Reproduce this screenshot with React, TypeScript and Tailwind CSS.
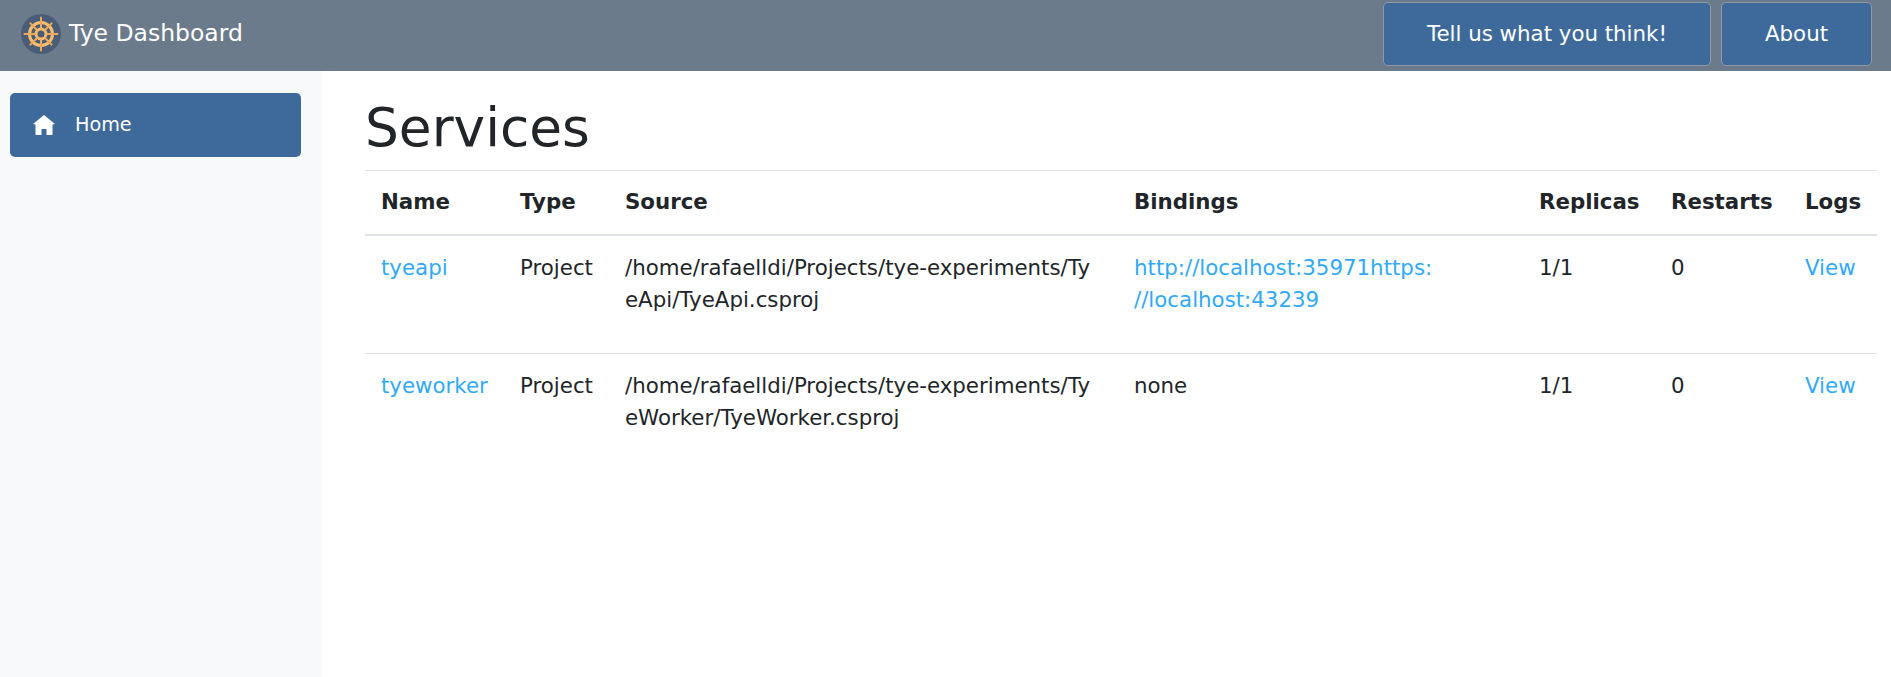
type Service = {
  name: string;
  source: string;
  bindings: string[];
};

const services: Service[] = [
  {
    name: 'tyeapi',
    source: '/home/rafaelldi/Projects/tye-experiments/TyeApi/TyeApi.csproj',
    bindings: ['http://localhost:35971https:', '//localhost:43239'],
  },
  {
    name: 'tyeworker',
    source: '/home/rafaelldi/Projects/tye-experiments/TyeWorker/TyeWorker.csproj',
    bindings: [],
  },
];

function WheelLogo() {
  const spokes = [0, 45, 90, 135, 180, 225, 270, 315];
  return (
    <svg viewBox="0 0 40 40" className="h-10 w-10 shrink-0">
      <circle cx="20" cy="20" r="20" fill="#4a5d78" />
      <circle cx="20" cy="20" r="11.5" fill="none" stroke="#f8bd6e" strokeWidth="3" />
      <circle cx="20" cy="20" r="5" fill="none" stroke="#f8bd6e" strokeWidth="3" />
      {spokes.map((angle) => (
        <line
          key={angle}
          x1="20"
          y1="14"
          x2="20"
          y2={angle % 90 === 0 ? 3.5 : 5}
          stroke="#f0a95a"
          strokeWidth="2"
          strokeLinecap="round"
          transform={`rotate(${angle} 20 20)`}
        />
      ))}
    </svg>
  );
}

function HomeIcon() {
  return (
    <svg viewBox="0 0 22 20" className="h-[20px] w-[22px] shrink-0" fill="currentColor">
      <path d="M11 0 L22 9 L19.5 9.5 L19.5 20 L13.5 20 L13.5 14 L8.5 14 L8.5 20 L2.5 20 L2.5 9.5 L0 9 Z" />
    </svg>
  );
}

export default function App() {
  return (
    <div className="flex h-[677px] flex-col overflow-hidden bg-white font-['DejaVu_Sans',sans-serif] text-[21.33px] leading-[32px] text-[#212529]">
      <header className="flex h-[71px] shrink-0 items-start justify-between bg-[#6c7b8b] pl-[21px] pr-[19px] pt-[2px]">
        <div className="mt-[12px] flex items-start gap-[8px]">
          <WheelLogo />
          <span className="mt-[3px] text-[23.47px] text-white">Tye Dashboard</span>
        </div>
        <div className="flex gap-[10px]">
          <button className="h-[64px] w-[328px] rounded-[5px] border border-[#8f9aa6] bg-[#3e6a9b] text-white">
            Tell us what you think!
          </button>
          <button className="h-[64px] w-[151px] rounded-[5px] border border-[#8f9aa6] bg-[#3e6a9b] text-white">
            About
          </button>
        </div>
      </header>

      <div className="flex min-h-0 flex-1">
        <aside className="w-[322px] shrink-0 bg-[#f8f9fa] pl-[10px] pr-[21px] pt-[22px]">
          <div className="flex h-[64px] items-center rounded-[5px] bg-[#3e6a9b] pl-[23px] text-[19.2px] text-white">
            <HomeIcon />
            <span className="ml-[20px]">Home</span>
          </div>
        </aside>

        <main className="min-w-0 flex-1 pl-[43px] pr-[14px]">
          <h1 className="pt-[25px] text-[53.33px] leading-[64px] text-[#212529]">Services</h1>
          <table className="mt-[10px] w-full table-fixed border-collapse text-left">
            <colgroup>
              <col className="w-[139px]" />
              <col className="w-[105px]" />
              <col className="w-[509px]" />
              <col className="w-[405px]" />
              <col className="w-[132px]" />
              <col className="w-[134px]" />
              <col className="w-[88px]" />
            </colgroup>
            <thead>
              <tr className="border-t border-b-2 border-t-[#dee2e6] border-b-[#dee2e6]">
                {['Name', 'Type', 'Source', 'Bindings', 'Replicas', 'Restarts', 'Logs'].map((h) => (
                  <th key={h} className="px-[16px] pb-[16px] pt-[15px] font-bold">
                    {h}
                  </th>
                ))}
              </tr>
            </thead>
            <tbody>
              {services.map((s) => (
                <tr key={s.name} className="border-b border-[#dee2e6] last:border-b-0">
                  <td className="h-[118px] p-[16px] align-top">
                    <a className="text-[#31a9fa]" href="#">
                      {s.name}
                    </a>
                  </td>
                  <td className="p-[16px] align-top">Project</td>
                  <td className="p-[16px] align-top break-all">{s.source}</td>
                  <td className="p-[16px] align-top">
                    {s.bindings.length === 0 ? (
                      'none'
                    ) : (
                      <a className="text-[#31a9fa]" href="#">
                        {s.bindings[0]}
                        <wbr />
                        {s.bindings[1]}
                      </a>
                    )}
                  </td>
                  <td className="p-[16px] align-top">1/1</td>
                  <td className="p-[16px] align-top">0</td>
                  <td className="p-[16px] align-top">
                    <a className="text-[#31a9fa]" href="#">
                      View
                    </a>
                  </td>
                </tr>
              ))}
            </tbody>
          </table>
        </main>
      </div>
    </div>
  );
}
